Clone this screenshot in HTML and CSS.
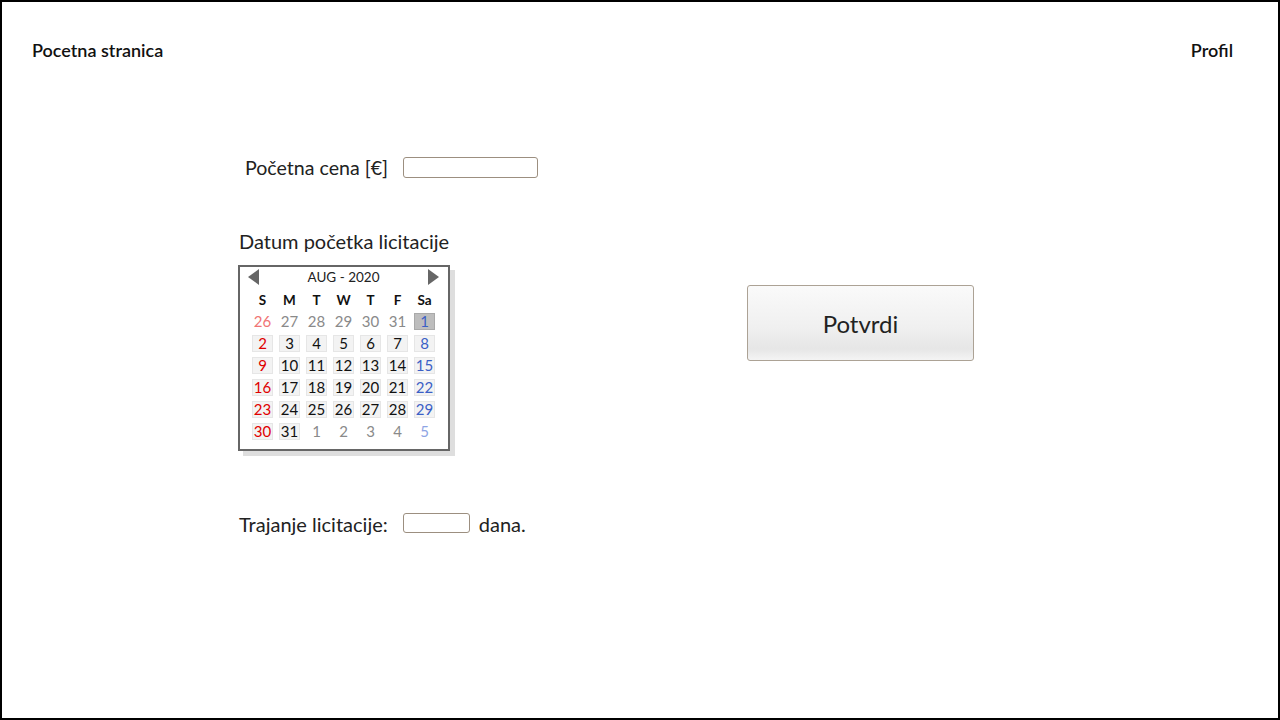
FILE: index.html
```html
<!DOCTYPE html>
<html lang="sr">
<head>
<meta charset="utf-8">
<title>Licitacija</title>
<link rel="stylesheet" href="styles.css">
</head>
<body>
<div class="page">
  <header class="topbar">
    <a class="nav-link">Pocetna stranica</a>
    <a class="nav-link">Profil</a>
  </header>
  <main class="main">
    <section class="form">
      <div class="row row-price">
        <label class="label">Početna cena [€]</label>
        <input class="input input-price" type="text">
      </div>
      <div class="label date-label">Datum početka licitacije</div>
      <div class="calendar">
        <div class="cal-head">
          <span class="tri tri-left"></span>
          <span class="cal-title">AUG - 2020</span>
          <span class="tri tri-right"></span>
        </div>
        <div class="cal-days">
          <span>S</span><span>M</span><span>T</span><span>W</span><span>T</span><span>F</span><span>Sa</span>
        </div>
        <div class="cal-grid">
          <span class="d other sun">26</span><span class="d other">27</span><span class="d other">28</span><span class="d other">29</span><span class="d other">30</span><span class="d other">31</span><span class="d cur sat sel">1</span>
          <span class="d cur sun">2</span><span class="d cur">3</span><span class="d cur">4</span><span class="d cur">5</span><span class="d cur">6</span><span class="d cur">7</span><span class="d cur sat">8</span>
          <span class="d cur sun">9</span><span class="d cur">10</span><span class="d cur">11</span><span class="d cur">12</span><span class="d cur">13</span><span class="d cur">14</span><span class="d cur sat">15</span>
          <span class="d cur sun">16</span><span class="d cur">17</span><span class="d cur">18</span><span class="d cur">19</span><span class="d cur">20</span><span class="d cur">21</span><span class="d cur sat">22</span>
          <span class="d cur sun">23</span><span class="d cur">24</span><span class="d cur">25</span><span class="d cur">26</span><span class="d cur">27</span><span class="d cur">28</span><span class="d cur sat">29</span>
          <span class="d cur sun">30</span><span class="d cur">31</span><span class="d other">1</span><span class="d other">2</span><span class="d other">3</span><span class="d other">4</span><span class="d other sat">5</span>
        </div>
      </div>
      <div class="row row-duration">
        <label class="label">Trajanje licitacije:</label>
        <input class="input input-days" type="text">
        <span class="label">dana.</span>
      </div>
    </section>
    <section class="actions">
      <button class="btn" type="button">Potvrdi</button>
    </section>
  </main>
</div>
</body>
</html>
```

FILE: styles.css
```css
* { box-sizing: border-box; }

html, body {
  margin: 0;
  padding: 0;
  background: #fff;
}

body {
  font-family: Lato, "Noto Sans", "DejaVu Sans", sans-serif;
  color: #1a1a1a;
}

.page {
  width: 1280px;
  height: 720px;
  border: 2px solid #000;
  display: flex;
  flex-direction: column;
}

.topbar {
  display: flex;
  justify-content: space-between;
  padding: 37px 45px 0 30px;
  height: 58px;
}

.nav-link {
  font-size: 18px;
  line-height: 22px;
  font-weight: 600;
  color: #111;
}

.main {
  display: flex;
  padding-left: 237px;
}

.form {
  width: 508px;
  display: flex;
  flex-direction: column;
  align-items: flex-start;
}

.label {
  font-size: 20px;
  line-height: 24px;
  color: #222;
}

.row {
  display: flex;
  align-items: center;
}

.row-price {
  margin-top: 97px;
  padding-left: 6px;
  height: 21px;
}

.row-price .label {
  font-size: 19.6px;
  margin-right: 15px;
}

.input {
  border: 1px solid #9c8f80;
  border-radius: 3px;
  background: #fff;
  padding: 0;
  margin: 0;
  outline: none;
}

.input-price {
  width: 135px;
  height: 21px;
}

.date-label {
  margin-top: 51px;
}

.calendar {
  margin-top: 12px;
  margin-left: -1px;
  width: 212px;
  border: 2px solid #666;
  background: #fff;
  box-shadow: 5px 5px 0 #dedede;
  padding: 0 11px 9px 12px;
}

.cal-head {
  height: 20px;
  display: flex;
  align-items: center;
  justify-content: space-between;
  margin: 0 -2px 0 -4px;
}

.cal-title {
  font-size: 13.5px;
  color: #222;
}

.tri {
  width: 0;
  height: 0;
  border-top: 8px solid transparent;
  border-bottom: 8px solid transparent;
}

.tri-left {
  border-right: 11px solid #666;
}

.tri-right {
  border-left: 11px solid #666;
}

.cal-days,
.cal-grid {
  display: grid;
  grid-template-columns: repeat(7, 21px);
  column-gap: 6px;
}

.cal-days {
  margin-top: 4px;
  height: 18px;
  font-size: 13.5px;
  font-weight: 700;
  line-height: 18px;
  text-align: center;
  color: #111;
}

.cal-grid {
  margin-top: 4px;
  grid-auto-rows: 17px;
  row-gap: 5px;
}

.d {
  font-size: 15px;
  line-height: 17px;
  text-align: center;
  color: #111;
}

.d.cur {
  background: #f3f3f3;
  border: 1px solid #e6e6e6;
  line-height: 15px;
}

.d.other { color: #8a8a8a; }
.d.other.sun { color: #f07474; }
.d.other.sat { color: #8ea4e4; }
.d.cur.sun { color: #e00000; }
.d.cur.sat { color: #3b5fc6; }

.d.sel {
  background: #bdbdbd;
  border-color: #a9a9a9;
}

.row-duration {
  margin-top: 62px;
  height: 20px;
}

.row-duration .label {
  position: relative;
  top: 1px;
}

.input-days {
  width: 67px;
  height: 20px;
  margin: 0 9px 0 15px;
}

.actions {
  padding-top: 225px;
}

.btn {
  width: 227px;
  height: 76px;
  border: 1px solid #aca295;
  border-radius: 3px;
  background: linear-gradient(#fafafa 0%, #f0f0f0 55%, #e6e6e6 85%, #f4f4f4 100%);
  font-family: Lato, "Noto Sans", sans-serif;
  font-size: 24px;
  color: #222;
  padding: 0;
  cursor: pointer;
}
```
